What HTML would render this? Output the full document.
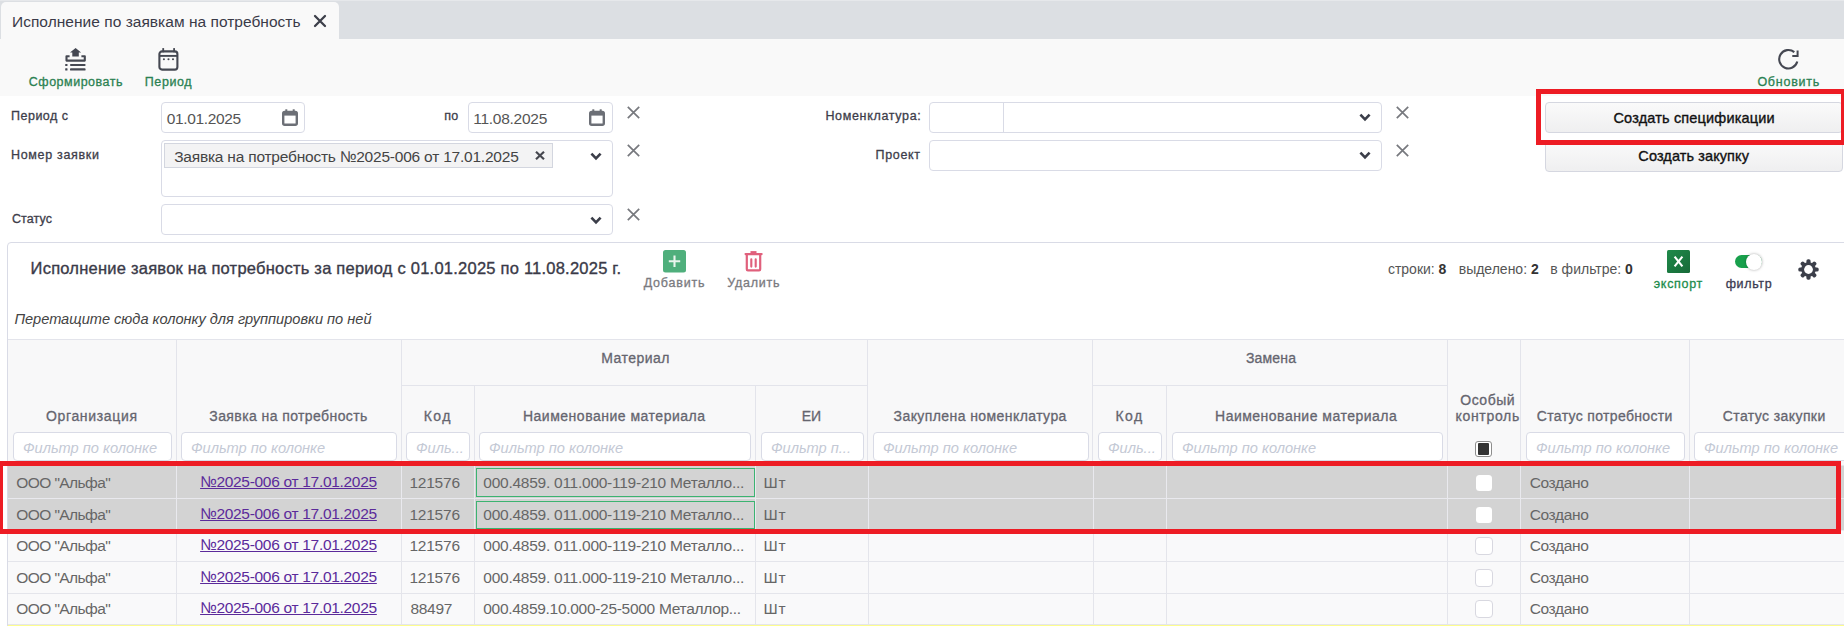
<!DOCTYPE html>
<html><head><meta charset="utf-8"><style>
html,body{margin:0;padding:0;}
body{width:1844px;height:626px;position:relative;overflow:hidden;background:#fff;font-family:"Liberation Sans", sans-serif;}
.t{position:absolute;white-space:nowrap;line-height:1;}
.r{position:absolute;}
</style></head><body>
<div class="r" style="left:0px;top:0px;width:1844px;height:39px;background:#dcdfe3;"></div>
<div class="r" style="left:0px;top:0px;width:1844px;height:1px;background:#e6e8eb;"></div>
<div class="r" style="left:1px;top:2px;width:338px;height:37px;background:#f9f9f9;border-radius:5px 5px 0 0;"></div>
<div class="t" style="left:12.00px;top:13.68px;font-size:15.5px;font-weight:normal;color:#3a3a48;letter-spacing:0.027px;">Исполнение по заявкам на потребность</div>
<svg class="r" style="left:313px;top:14px" width="14" height="14" viewBox="0 0 14 14"><path d="M2 2L12 12M12 2L2 12" stroke="#3d3f4a" stroke-width="2.3" stroke-linecap="round"/></svg>
<div class="r" style="left:0px;top:39px;width:1844px;height:57px;background:#f9f9f9;"></div>
<svg class="r" style="left:65px;top:48px" width="21" height="23" viewBox="0 0 21 23">
<path d="M10.6 0.1L5 4.4H7.3V8.5H13.8V4.4H16.1Z" fill="#454852"/>
<path d="M4.6 8.3H1.5V12.6H19.8V8.3H16.4" fill="none" stroke="#454852" stroke-width="2.1" stroke-linejoin="round"/>
<rect x="0.2" y="15.9" width="2.3" height="2.1" rx="0.5" fill="#454852"/>
<rect x="5" y="15.9" width="15.6" height="2.1" rx="0.9" fill="#454852"/>
<rect x="0.2" y="20.3" width="2.3" height="2.3" rx="0.5" fill="#454852"/>
<rect x="5" y="20.3" width="15.6" height="2.3" rx="0.9" fill="#454852"/>
</svg>
<div class="t" style="left:28.80px;top:75.82px;font-size:12.5px;font-weight:normal;color:#2b8152;letter-spacing:0.509px;-webkit-text-stroke:0.3px #2b8152;">Сформировать</div>
<svg class="r" style="left:158px;top:48px" width="21" height="23" viewBox="0 0 21 23">
<rect x="1.4" y="3.4" width="18" height="18.2" rx="2.6" fill="none" stroke="#454852" stroke-width="2.1"/>
<path d="M1.4 7.9H19.4" stroke="#454852" stroke-width="1.9"/>
<rect x="4.3" y="0.1" width="1.8" height="4.2" fill="#454852"/>
<rect x="15.2" y="0.1" width="1.8" height="4.2" fill="#454852"/>
<circle cx="5.9" cy="11.3" r="1.05" fill="#454852"/>
<circle cx="10.5" cy="11.3" r="1.05" fill="#454852"/>
<circle cx="15.0" cy="11.3" r="1.05" fill="#454852"/>
</svg>
<div class="t" style="left:144.80px;top:75.82px;font-size:12.5px;font-weight:normal;color:#2b8152;letter-spacing:0.590px;-webkit-text-stroke:0.3px #2b8152;">Период</div>
<svg class="r" style="left:1777px;top:48px" width="23" height="23" viewBox="0 0 23 23">
<path d="M20.3 13.6A9.2 9.2 0 1 1 17.3 4.15" fill="none" stroke="#454852" stroke-width="2.1"/>
<path d="M20.6 2.6V7.9H15.3" fill="none" stroke="#454852" stroke-width="2"/>
</svg>
<div class="t" style="left:1757.40px;top:75.62px;font-size:12.5px;font-weight:normal;color:#2b8152;letter-spacing:0.759px;-webkit-text-stroke:0.3px #2b8152;">Обновить</div>
<div class="t" style="left:11.00px;top:109.52px;font-size:12.5px;font-weight:normal;color:#3d3d4a;letter-spacing:0.498px;-webkit-text-stroke:0.3px #3d3d4a;">Период с</div>
<div class="t" style="left:11.00px;top:149.02px;font-size:12.5px;font-weight:normal;color:#3d3d4a;letter-spacing:0.672px;-webkit-text-stroke:0.3px #3d3d4a;">Номер заявки</div>
<div class="t" style="left:12.00px;top:212.82px;font-size:12.5px;font-weight:normal;color:#3d3d4a;letter-spacing:0.087px;-webkit-text-stroke:0.3px #3d3d4a;">Статус</div>
<div class="t" style="left:444.30px;top:109.52px;font-size:12.5px;font-weight:normal;color:#3d3d4a;letter-spacing:0.231px;-webkit-text-stroke:0.3px #3d3d4a;">по</div>
<div class="r" style="left:161px;top:102px;width:144px;height:31px;border:1px solid #d9dbe6;border-radius:4px;background:#fff;box-sizing:border-box;"></div>
<div class="t" style="left:166.80px;top:110.78px;font-size:15.5px;font-weight:normal;color:#555;letter-spacing:-0.351px;">01.01.2025</div>
<svg class="r" style="left:282px;top:109px" width="16" height="17" viewBox="0 0 16 17">
<rect x="1.2" y="3" width="13.6" height="12.8" rx="1.5" fill="none" stroke="#6c6f76" stroke-width="2.4"/>
<rect x="1.2" y="3" width="13.6" height="3.6" fill="#6c6f76"/>
<rect x="3.3" y="0.3" width="2" height="3" fill="#6c6f76"/>
<rect x="10.7" y="0.3" width="2" height="3" fill="#6c6f76"/>
</svg>
<div class="r" style="left:468px;top:102px;width:145px;height:31px;border:1px solid #d9dbe6;border-radius:4px;background:#fff;box-sizing:border-box;"></div>
<div class="t" style="left:473.20px;top:110.78px;font-size:15.5px;font-weight:normal;color:#555;letter-spacing:-0.256px;">11.08.2025</div>
<svg class="r" style="left:589px;top:109px" width="16" height="17" viewBox="0 0 16 17">
<rect x="1.2" y="3" width="13.6" height="12.8" rx="1.5" fill="none" stroke="#6c6f76" stroke-width="2.4"/>
<rect x="1.2" y="3" width="13.6" height="3.6" fill="#6c6f76"/>
<rect x="3.3" y="0.3" width="2" height="3" fill="#6c6f76"/>
<rect x="10.7" y="0.3" width="2" height="3" fill="#6c6f76"/>
</svg>
<svg class="r" style="left:626.7px;top:106px" width="13" height="13" viewBox="0 0 13 13"><path d="M0.8 0.8L12.2 12.2M12.2 0.8L0.8 12.2" stroke="#77797e" stroke-width="1.7"/></svg>
<div class="r" style="left:161px;top:140px;width:452px;height:57px;border:1px solid #d9dbe6;border-radius:4px;background:#fff;box-sizing:border-box;"></div>
<div class="r" style="left:164px;top:143px;width:389px;height:25px;background:#f3f3f4;border:1px solid #d3d6df;box-sizing:border-box;"></div>
<div class="t" style="left:174.20px;top:149.28px;font-size:15.5px;font-weight:normal;color:#444;letter-spacing:-0.213px;">Заявка на потребность №2025-006 от 17.01.2025</div>
<svg class="r" style="left:535px;top:150.9px" width="10" height="9" viewBox="0 0 10 9"><path d="M1 0.8L9 8.2M9 0.8L1 8.2" stroke="#45474f" stroke-width="2.2"/></svg>
<svg class="r" style="left:590px;top:152px" width="12" height="9" viewBox="0 0 12 9"><path d="M1.4 1.6L6 6.4L10.6 1.6" fill="none" stroke="#3b3e49" stroke-width="2.6"/></svg>
<svg class="r" style="left:626.7px;top:144px" width="13" height="13" viewBox="0 0 13 13"><path d="M0.8 0.8L12.2 12.2M12.2 0.8L0.8 12.2" stroke="#77797e" stroke-width="1.7"/></svg>
<div class="r" style="left:161px;top:204px;width:452px;height:31px;border:1px solid #d9dbe6;border-radius:4px;background:#fff;box-sizing:border-box;"></div>
<svg class="r" style="left:590px;top:216px" width="12" height="9" viewBox="0 0 12 9"><path d="M1.4 1.6L6 6.4L10.6 1.6" fill="none" stroke="#3b3e49" stroke-width="2.6"/></svg>
<svg class="r" style="left:626.7px;top:208px" width="13" height="13" viewBox="0 0 13 13"><path d="M0.8 0.8L12.2 12.2M12.2 0.8L0.8 12.2" stroke="#77797e" stroke-width="1.7"/></svg>
<div class="t" style="left:825.40px;top:109.62px;font-size:12.5px;font-weight:normal;color:#3d3d4a;letter-spacing:0.668px;-webkit-text-stroke:0.3px #3d3d4a;">Номенклатура:</div>
<div class="t" style="left:875.50px;top:148.62px;font-size:12.5px;font-weight:normal;color:#3d3d4a;letter-spacing:0.670px;-webkit-text-stroke:0.3px #3d3d4a;">Проект</div>
<div class="r" style="left:929px;top:102px;width:453px;height:31px;border:1px solid #d9dbe6;border-radius:4px;background:#fff;box-sizing:border-box;"></div>
<div class="r" style="left:1003px;top:103px;width:1px;height:29px;background:#d9dbe6;"></div>
<svg class="r" style="left:1359px;top:113px" width="12" height="9" viewBox="0 0 12 9"><path d="M1.4 1.6L6 6.4L10.6 1.6" fill="none" stroke="#3b3e49" stroke-width="2.6"/></svg>
<div class="r" style="left:929px;top:140px;width:453px;height:31px;border:1px solid #d9dbe6;border-radius:4px;background:#fff;box-sizing:border-box;"></div>
<svg class="r" style="left:1359px;top:151px" width="12" height="9" viewBox="0 0 12 9"><path d="M1.4 1.6L6 6.4L10.6 1.6" fill="none" stroke="#3b3e49" stroke-width="2.6"/></svg>
<svg class="r" style="left:1396px;top:106px" width="13" height="13" viewBox="0 0 13 13"><path d="M0.8 0.8L12.2 12.2M12.2 0.8L0.8 12.2" stroke="#77797e" stroke-width="1.7"/></svg>
<svg class="r" style="left:1396px;top:144px" width="13" height="13" viewBox="0 0 13 13"><path d="M0.8 0.8L12.2 12.2M12.2 0.8L0.8 12.2" stroke="#77797e" stroke-width="1.7"/></svg>
<div class="r" style="left:1545px;top:102px;width:298px;height:31px;border:1px solid #d5d7e0;border-radius:4px;background:linear-gradient(#fafafa,#efeff0);box-sizing:border-box;"></div>
<div class="t" style="left:1613.45px;top:110.62px;font-size:14.5px;font-weight:normal;color:#111;letter-spacing:0.170px;-webkit-text-stroke:0.35px #111;">Создать спецификации</div>
<div class="r" style="left:1545px;top:141px;width:298px;height:31px;border:1px solid #d5d7e0;border-radius:4px;background:linear-gradient(#fafafa,#efeff0);box-sizing:border-box;"></div>
<div class="t" style="left:1638.35px;top:148.72px;font-size:14.5px;font-weight:normal;color:#111;letter-spacing:0.096px;-webkit-text-stroke:0.35px #111;">Создать закупку</div>
<div class="r" style="left:1536px;top:89px;width:310px;height:56px;border:5px solid #ed1c24;box-sizing:border-box;"></div>
<div class="r" style="left:7px;top:242px;width:1850px;height:500px;border:1px solid #d9dbe6;border-radius:4px;background:#fff;box-sizing:border-box;"></div>
<div class="t" style="left:30.60px;top:260.23px;font-size:16.5px;font-weight:normal;color:#3a3a48;letter-spacing:0.230px;-webkit-text-stroke:0.35px #3a3a48;">Исполнение заявок на потребность за период с 01.01.2025 по 11.08.2025 г.</div>
<svg class="r" style="left:663px;top:250px" width="23" height="23" viewBox="0 0 23 23">
<rect x="0" y="0" width="23" height="22.5" rx="2.5" fill="#4faf7c"/>
<path d="M11.5 5.5V17M5.8 11.3H17.2" stroke="#e9f5ed" stroke-width="2.1"/>
</svg>
<div class="t" style="left:643.70px;top:277.02px;font-size:12.5px;font-weight:normal;color:#7a7a80;letter-spacing:0.796px;-webkit-text-stroke:0.3px #7a7a80;">Добавить</div>
<svg class="r" style="left:744px;top:251px" width="19" height="21" viewBox="0 0 19 21">
<path d="M6.5 1.2H12.5" stroke="#e0607c" stroke-width="2.2"/>
<path d="M1.6 3.1H17.6" stroke="#e0607c" stroke-width="2.3" stroke-linecap="round"/>
<path d="M2.8 4V18.3Q2.8 19.4 3.9 19.4H15.1Q16.2 19.4 16.2 18.3V4" fill="none" stroke="#e0607c" stroke-width="2.2"/>
<path d="M7.3 8.3V15.6M11.7 8.3V15.6" stroke="#e0607c" stroke-width="2.1" stroke-linecap="round"/>
</svg>
<div class="t" style="left:727.30px;top:277.02px;font-size:12.5px;font-weight:normal;color:#7a7a80;letter-spacing:0.732px;-webkit-text-stroke:0.3px #7a7a80;">Удалить</div>
<div class="t" style="left:1387.9px;top:262.05px;font-size:14px;color:#555;">строки: <b style="color:#333">8</b></div>
<div class="t" style="left:1458.7px;top:262.05px;font-size:14px;color:#555;">выделено: <b style="color:#333">2</b></div>
<div class="t" style="left:1550.3px;top:262.05px;font-size:14px;color:#555;">в фильтре: <b style="color:#333">0</b></div>
<svg class="r" style="left:1667px;top:250px" width="23" height="23" viewBox="0 0 23 23">
<defs><linearGradient id="xg" x1="0" y1="0" x2="1" y2="1"><stop offset="0" stop-color="#1f8a4a"/><stop offset="1" stop-color="#176a38"/></linearGradient></defs>
<rect x="0" y="0" width="23" height="23" rx="1.5" fill="url(#xg)"/>
<path d="M7.6 6.6L15.4 16.4M15.4 6.6L7.6 16.4" stroke="#fff" stroke-width="2.1"/>
</svg>
<div class="t" style="left:1653.80px;top:277.52px;font-size:12.5px;font-weight:normal;color:#1c8c4c;letter-spacing:0.677px;-webkit-text-stroke:0.3px #1c8c4c;">экспорт</div>
<div class="r" style="left:1735px;top:255px;width:27px;height:13px;background:#18a04c;border-radius:7px;"></div>
<div class="r" style="left:1746px;top:254px;width:16px;height:16px;background:#fff;border-radius:50%;box-shadow:0 0 3px rgba(0,0,0,0.35);"></div>
<div class="t" style="left:1725.70px;top:277.52px;font-size:12.5px;font-weight:normal;color:#3a3a50;letter-spacing:0.636px;-webkit-text-stroke:0.3px #3a3a50;">фильтр</div>
<svg class="r" style="left:1798px;top:259px" width="21" height="21" viewBox="-10.5 -10.5 21 21">
<g fill="#3c3f4a"><rect x="-2.1" y="-10.2" width="4.2" height="5" rx="1.7" transform="rotate(0)"/><rect x="-2.1" y="-10.2" width="4.2" height="5" rx="1.7" transform="rotate(45)"/><rect x="-2.1" y="-10.2" width="4.2" height="5" rx="1.7" transform="rotate(90)"/><rect x="-2.1" y="-10.2" width="4.2" height="5" rx="1.7" transform="rotate(135)"/><rect x="-2.1" y="-10.2" width="4.2" height="5" rx="1.7" transform="rotate(180)"/><rect x="-2.1" y="-10.2" width="4.2" height="5" rx="1.7" transform="rotate(225)"/><rect x="-2.1" y="-10.2" width="4.2" height="5" rx="1.7" transform="rotate(270)"/><rect x="-2.1" y="-10.2" width="4.2" height="5" rx="1.7" transform="rotate(315)"/>
<circle r="7.3"/></g><circle r="4.4" fill="#fff"/>
</svg>
<div class="t" style="left:14.40px;top:311.74px;font-size:14.6px;font-weight:normal;color:#444;letter-spacing:-0.006px;font-style:italic;">Перетащите сюда колонку для группировки по ней</div>
<div class="r" style="left:8px;top:339px;width:1840px;height:127px;background:#f8f8f9;"></div>
<div class="r" style="left:8px;top:339px;width:1840px;height:1px;background:#e3e4eb;"></div>
<div class="r" style="left:176px;top:339px;width:1px;height:128px;background:#e3e4eb;"></div>
<div class="r" style="left:401px;top:339px;width:1px;height:128px;background:#e3e4eb;"></div>
<div class="r" style="left:867px;top:339px;width:1px;height:128px;background:#e3e4eb;"></div>
<div class="r" style="left:1092px;top:339px;width:1px;height:128px;background:#e3e4eb;"></div>
<div class="r" style="left:1447px;top:339px;width:1px;height:128px;background:#e3e4eb;"></div>
<div class="r" style="left:1520px;top:339px;width:1px;height:128px;background:#e3e4eb;"></div>
<div class="r" style="left:1689px;top:339px;width:1px;height:128px;background:#e3e4eb;"></div>
<div class="r" style="left:474px;top:385px;width:1px;height:82px;background:#e3e4eb;"></div>
<div class="r" style="left:755px;top:385px;width:1px;height:82px;background:#e3e4eb;"></div>
<div class="r" style="left:1166px;top:385px;width:1px;height:82px;background:#e3e4eb;"></div>
<div class="r" style="left:401px;top:385px;width:466px;height:1px;background:#e3e4eb;"></div>
<div class="r" style="left:1092px;top:385px;width:355px;height:1px;background:#e3e4eb;"></div>
<div class="t" style="left:45.95px;top:408.85px;font-size:14px;font-weight:normal;color:#65656f;letter-spacing:0.664px;-webkit-text-stroke:0.3px #65656f;">Организация</div>
<div class="t" style="left:209.30px;top:408.85px;font-size:14px;font-weight:normal;color:#65656f;letter-spacing:0.409px;-webkit-text-stroke:0.3px #65656f;">Заявка на потребность</div>
<div class="t" style="left:423.65px;top:408.85px;font-size:14px;font-weight:normal;color:#65656f;letter-spacing:1.433px;-webkit-text-stroke:0.3px #65656f;">Код</div>
<div class="t" style="left:522.95px;top:408.85px;font-size:14px;font-weight:normal;color:#65656f;letter-spacing:0.507px;-webkit-text-stroke:0.3px #65656f;">Наименование материала</div>
<div class="t" style="left:801.65px;top:408.85px;font-size:14px;font-weight:normal;color:#65656f;letter-spacing:-0.038px;-webkit-text-stroke:0.3px #65656f;">ЕИ</div>
<div class="t" style="left:893.60px;top:408.85px;font-size:14px;font-weight:normal;color:#65656f;letter-spacing:0.416px;-webkit-text-stroke:0.3px #65656f;">Закуплена номенклатура</div>
<div class="t" style="left:1115.45px;top:408.85px;font-size:14px;font-weight:normal;color:#65656f;letter-spacing:1.433px;-webkit-text-stroke:0.3px #65656f;">Код</div>
<div class="t" style="left:1215.05px;top:408.85px;font-size:14px;font-weight:normal;color:#65656f;letter-spacing:0.488px;-webkit-text-stroke:0.3px #65656f;">Наименование материала</div>
<div class="t" style="left:1460.25px;top:392.85px;font-size:14px;font-weight:normal;color:#65656f;letter-spacing:0.517px;-webkit-text-stroke:0.3px #65656f;">Особый</div>
<div class="t" style="left:1455.50px;top:409.05px;font-size:14px;font-weight:normal;color:#65656f;letter-spacing:0.679px;-webkit-text-stroke:0.3px #65656f;">контроль</div>
<div class="t" style="left:1536.80px;top:408.85px;font-size:14px;font-weight:normal;color:#65656f;letter-spacing:0.342px;-webkit-text-stroke:0.3px #65656f;">Статус потребности</div>
<div class="t" style="left:1722.80px;top:408.85px;font-size:14px;font-weight:normal;color:#65656f;letter-spacing:0.405px;-webkit-text-stroke:0.3px #65656f;">Статус закупки</div>
<div class="t" style="left:601.20px;top:351.35px;font-size:14px;font-weight:normal;color:#65656f;letter-spacing:0.481px;-webkit-text-stroke:0.3px #65656f;">Материал</div>
<div class="t" style="left:1245.90px;top:351.35px;font-size:14px;font-weight:normal;color:#65656f;letter-spacing:0.183px;-webkit-text-stroke:0.3px #65656f;">Замена</div>
<div class="r" style="left:13px;top:432px;width:159px;height:29px;border:1px solid #d9dbe6;border-radius:4px;background:#fff;box-sizing:border-box;"></div>
<div class="t" style="left:23.00px;top:441.04px;width:146.00px;overflow:hidden;font-size:14.6px;font-style:italic;color:#c4c9d5;">Фильтр по колонке</div>
<div class="r" style="left:181px;top:432px;width:216px;height:29px;border:1px solid #d9dbe6;border-radius:4px;background:#fff;box-sizing:border-box;"></div>
<div class="t" style="left:191.00px;top:441.04px;width:203.00px;overflow:hidden;font-size:14.6px;font-style:italic;color:#c4c9d5;">Фильтр по колонке</div>
<div class="r" style="left:406px;top:432px;width:64px;height:29px;border:1px solid #d9dbe6;border-radius:4px;background:#fff;box-sizing:border-box;"></div>
<div class="t" style="left:416.00px;top:441.04px;width:51.00px;overflow:hidden;font-size:14.6px;font-style:italic;color:#c4c9d5;">Филь...</div>
<div class="r" style="left:479px;top:432px;width:272px;height:29px;border:1px solid #d9dbe6;border-radius:4px;background:#fff;box-sizing:border-box;"></div>
<div class="t" style="left:489.00px;top:441.04px;width:259.00px;overflow:hidden;font-size:14.6px;font-style:italic;color:#c4c9d5;">Фильтр по колонке</div>
<div class="r" style="left:761px;top:432px;width:103px;height:29px;border:1px solid #d9dbe6;border-radius:4px;background:#fff;box-sizing:border-box;"></div>
<div class="t" style="left:771.00px;top:441.04px;width:90.00px;overflow:hidden;font-size:14.6px;font-style:italic;color:#c4c9d5;">Фильтр п...</div>
<div class="r" style="left:873px;top:432px;width:216px;height:29px;border:1px solid #d9dbe6;border-radius:4px;background:#fff;box-sizing:border-box;"></div>
<div class="t" style="left:883.00px;top:441.04px;width:203.00px;overflow:hidden;font-size:14.6px;font-style:italic;color:#c4c9d5;">Фильтр по колонке</div>
<div class="r" style="left:1098px;top:432px;width:64px;height:29px;border:1px solid #d9dbe6;border-radius:4px;background:#fff;box-sizing:border-box;"></div>
<div class="t" style="left:1108.00px;top:441.04px;width:51.00px;overflow:hidden;font-size:14.6px;font-style:italic;color:#c4c9d5;">Филь...</div>
<div class="r" style="left:1172px;top:432px;width:271px;height:29px;border:1px solid #d9dbe6;border-radius:4px;background:#fff;box-sizing:border-box;"></div>
<div class="t" style="left:1182.00px;top:441.04px;width:258.00px;overflow:hidden;font-size:14.6px;font-style:italic;color:#c4c9d5;">Фильтр по колонке</div>
<div class="r" style="left:1526px;top:432px;width:159px;height:29px;border:1px solid #d9dbe6;border-radius:4px;background:#fff;box-sizing:border-box;"></div>
<div class="t" style="left:1536.00px;top:441.04px;width:146.00px;overflow:hidden;font-size:14.6px;font-style:italic;color:#c4c9d5;">Фильтр по колонке</div>
<div class="r" style="left:1694px;top:432px;width:177px;height:29px;border:1px solid #d9dbe6;border-radius:4px;background:#fff;box-sizing:border-box;"></div>
<div class="t" style="left:1704.00px;top:441.04px;width:164.00px;overflow:hidden;font-size:14.6px;font-style:italic;color:#c4c9d5;">Фильтр по колонке</div>
<div class="r" style="left:1475.3px;top:440.7px;width:16.5px;height:16.5px;border:1px solid #8d8d8d;border-radius:3px;background:#fff;box-sizing:border-box;"></div>
<div class="r" style="left:1477.8px;top:443.2px;width:11.5px;height:11.5px;background:#333;border-radius:1px;"></div>
<div class="r" style="left:8px;top:465px;width:1840px;height:1px;background:#e4e5eb;"></div>
<div class="r" style="left:8px;top:466px;width:1840px;height:32px;background:#d3d3d3;"></div>
<div class="r" style="left:8px;top:498px;width:1840px;height:1px;background:#e9e9ee;"></div>
<div class="r" style="left:176px;top:466px;width:1px;height:32px;background:#e9e9ee;"></div>
<div class="r" style="left:401px;top:466px;width:1px;height:32px;background:#e9e9ee;"></div>
<div class="r" style="left:868px;top:466px;width:1px;height:32px;background:#e9e9ee;"></div>
<div class="r" style="left:1093px;top:466px;width:1px;height:32px;background:#e9e9ee;"></div>
<div class="r" style="left:1447px;top:466px;width:1px;height:32px;background:#e9e9ee;"></div>
<div class="r" style="left:1520px;top:466px;width:1px;height:32px;background:#e9e9ee;"></div>
<div class="r" style="left:1689px;top:466px;width:1px;height:32px;background:#e9e9ee;"></div>
<div class="r" style="left:474px;top:466px;width:1px;height:32px;background:#e9e9ee;"></div>
<div class="r" style="left:755px;top:466px;width:1px;height:32px;background:#e9e9ee;"></div>
<div class="r" style="left:1166px;top:466px;width:1px;height:32px;background:#e9e9ee;"></div>
<div class="t" style="left:16.30px;top:475.18px;font-size:15.5px;font-weight:normal;color:#666;letter-spacing:-0.591px;">ООО "Альфа"</div>
<div class="t" style="left:200.10px;top:473.78px;font-size:15.5px;font-weight:normal;color:#5b2a9a;letter-spacing:-0.304px;text-decoration:underline;">№2025-006 от 17.01.2025</div>
<div class="t" style="left:409.40px;top:475.18px;font-size:15.5px;font-weight:normal;color:#666;letter-spacing:-0.220px;">121576</div>
<div class="t" style="left:483.30px;top:475.18px;font-size:15.5px;font-weight:normal;color:#666;letter-spacing:-0.254px;">000.4859. 011.000-119-210 Металло...</div>
<div class="t" style="left:763.60px;top:475.18px;font-size:15.5px;font-weight:normal;color:#666;letter-spacing:0.794px;">Шт</div>
<div class="t" style="left:1529.70px;top:475.18px;font-size:15.5px;font-weight:normal;color:#666;letter-spacing:-0.355px;">Создано</div>
<div class="r" style="left:1476px;top:474.6px;width:16px;height:16px;background:#fff;border-radius:3.5px;"></div>
<div class="r" style="left:475.5px;top:467.5px;width:279.5px;height:29.2px;border:1px solid #3cb371;box-sizing:border-box;"></div>
<div class="r" style="left:8px;top:499px;width:1840px;height:31px;background:#d3d3d3;"></div>
<div class="r" style="left:8px;top:530px;width:1840px;height:1px;background:#e9e9ee;"></div>
<div class="r" style="left:176px;top:499px;width:1px;height:31px;background:#e9e9ee;"></div>
<div class="r" style="left:401px;top:499px;width:1px;height:31px;background:#e9e9ee;"></div>
<div class="r" style="left:868px;top:499px;width:1px;height:31px;background:#e9e9ee;"></div>
<div class="r" style="left:1093px;top:499px;width:1px;height:31px;background:#e9e9ee;"></div>
<div class="r" style="left:1447px;top:499px;width:1px;height:31px;background:#e9e9ee;"></div>
<div class="r" style="left:1520px;top:499px;width:1px;height:31px;background:#e9e9ee;"></div>
<div class="r" style="left:1689px;top:499px;width:1px;height:31px;background:#e9e9ee;"></div>
<div class="r" style="left:474px;top:499px;width:1px;height:31px;background:#e9e9ee;"></div>
<div class="r" style="left:755px;top:499px;width:1px;height:31px;background:#e9e9ee;"></div>
<div class="r" style="left:1166px;top:499px;width:1px;height:31px;background:#e9e9ee;"></div>
<div class="t" style="left:16.30px;top:507.18px;font-size:15.5px;font-weight:normal;color:#666;letter-spacing:-0.591px;">ООО "Альфа"</div>
<div class="t" style="left:200.10px;top:505.78px;font-size:15.5px;font-weight:normal;color:#5b2a9a;letter-spacing:-0.304px;text-decoration:underline;">№2025-006 от 17.01.2025</div>
<div class="t" style="left:409.40px;top:507.18px;font-size:15.5px;font-weight:normal;color:#666;letter-spacing:-0.220px;">121576</div>
<div class="t" style="left:483.30px;top:507.18px;font-size:15.5px;font-weight:normal;color:#666;letter-spacing:-0.254px;">000.4859. 011.000-119-210 Металло...</div>
<div class="t" style="left:763.60px;top:507.18px;font-size:15.5px;font-weight:normal;color:#666;letter-spacing:0.794px;">Шт</div>
<div class="t" style="left:1529.70px;top:507.18px;font-size:15.5px;font-weight:normal;color:#666;letter-spacing:-0.355px;">Создано</div>
<div class="r" style="left:1476px;top:506.6px;width:16px;height:16px;background:#fff;border-radius:3.5px;"></div>
<div class="r" style="left:475.5px;top:500.5px;width:279.5px;height:28.2px;border:1px solid #3cb371;box-sizing:border-box;"></div>
<div class="r" style="left:8px;top:531px;width:1840px;height:30px;background:#f9f9fa;"></div>
<div class="r" style="left:8px;top:561px;width:1840px;height:1px;background:#e4e5eb;"></div>
<div class="r" style="left:176px;top:531px;width:1px;height:30px;background:#e4e5eb;"></div>
<div class="r" style="left:401px;top:531px;width:1px;height:30px;background:#e4e5eb;"></div>
<div class="r" style="left:868px;top:531px;width:1px;height:30px;background:#e4e5eb;"></div>
<div class="r" style="left:1093px;top:531px;width:1px;height:30px;background:#e4e5eb;"></div>
<div class="r" style="left:1447px;top:531px;width:1px;height:30px;background:#e4e5eb;"></div>
<div class="r" style="left:1520px;top:531px;width:1px;height:30px;background:#e4e5eb;"></div>
<div class="r" style="left:1689px;top:531px;width:1px;height:30px;background:#e4e5eb;"></div>
<div class="r" style="left:474px;top:531px;width:1px;height:30px;background:#e4e5eb;"></div>
<div class="r" style="left:755px;top:531px;width:1px;height:30px;background:#e4e5eb;"></div>
<div class="r" style="left:1166px;top:531px;width:1px;height:30px;background:#e4e5eb;"></div>
<div class="t" style="left:16.30px;top:538.18px;font-size:15.5px;font-weight:normal;color:#666;letter-spacing:-0.591px;">ООО "Альфа"</div>
<div class="t" style="left:200.10px;top:536.78px;font-size:15.5px;font-weight:normal;color:#5b2a9a;letter-spacing:-0.304px;text-decoration:underline;">№2025-006 от 17.01.2025</div>
<div class="t" style="left:409.40px;top:538.18px;font-size:15.5px;font-weight:normal;color:#666;letter-spacing:-0.220px;">121576</div>
<div class="t" style="left:483.30px;top:538.18px;font-size:15.5px;font-weight:normal;color:#666;letter-spacing:-0.254px;">000.4859. 011.000-119-210 Металло...</div>
<div class="t" style="left:763.60px;top:538.18px;font-size:15.5px;font-weight:normal;color:#666;letter-spacing:0.794px;">Шт</div>
<div class="t" style="left:1529.70px;top:538.18px;font-size:15.5px;font-weight:normal;color:#666;letter-spacing:-0.355px;">Создано</div>
<div class="r" style="left:1475px;top:536.5px;width:18px;height:18px;background:#fff;border:1px solid #d8d8e0;border-radius:4px;box-sizing:border-box;"></div>
<div class="r" style="left:8px;top:562px;width:1840px;height:31px;background:#f9f9fa;"></div>
<div class="r" style="left:8px;top:593px;width:1840px;height:1px;background:#e4e5eb;"></div>
<div class="r" style="left:176px;top:562px;width:1px;height:31px;background:#e4e5eb;"></div>
<div class="r" style="left:401px;top:562px;width:1px;height:31px;background:#e4e5eb;"></div>
<div class="r" style="left:868px;top:562px;width:1px;height:31px;background:#e4e5eb;"></div>
<div class="r" style="left:1093px;top:562px;width:1px;height:31px;background:#e4e5eb;"></div>
<div class="r" style="left:1447px;top:562px;width:1px;height:31px;background:#e4e5eb;"></div>
<div class="r" style="left:1520px;top:562px;width:1px;height:31px;background:#e4e5eb;"></div>
<div class="r" style="left:1689px;top:562px;width:1px;height:31px;background:#e4e5eb;"></div>
<div class="r" style="left:474px;top:562px;width:1px;height:31px;background:#e4e5eb;"></div>
<div class="r" style="left:755px;top:562px;width:1px;height:31px;background:#e4e5eb;"></div>
<div class="r" style="left:1166px;top:562px;width:1px;height:31px;background:#e4e5eb;"></div>
<div class="t" style="left:16.30px;top:570.18px;font-size:15.5px;font-weight:normal;color:#666;letter-spacing:-0.591px;">ООО "Альфа"</div>
<div class="t" style="left:200.10px;top:568.78px;font-size:15.5px;font-weight:normal;color:#5b2a9a;letter-spacing:-0.304px;text-decoration:underline;">№2025-006 от 17.01.2025</div>
<div class="t" style="left:409.40px;top:570.18px;font-size:15.5px;font-weight:normal;color:#666;letter-spacing:-0.220px;">121576</div>
<div class="t" style="left:483.30px;top:570.18px;font-size:15.5px;font-weight:normal;color:#666;letter-spacing:-0.254px;">000.4859. 011.000-119-210 Металло...</div>
<div class="t" style="left:763.60px;top:570.18px;font-size:15.5px;font-weight:normal;color:#666;letter-spacing:0.794px;">Шт</div>
<div class="t" style="left:1529.70px;top:570.18px;font-size:15.5px;font-weight:normal;color:#666;letter-spacing:-0.355px;">Создано</div>
<div class="r" style="left:1475px;top:568.5px;width:18px;height:18px;background:#fff;border:1px solid #d8d8e0;border-radius:4px;box-sizing:border-box;"></div>
<div class="r" style="left:8px;top:594px;width:1840px;height:30px;background:#f9f9fa;"></div>
<div class="r" style="left:8px;top:624px;width:1840px;height:1px;background:#e4e5eb;"></div>
<div class="r" style="left:176px;top:594px;width:1px;height:30px;background:#e4e5eb;"></div>
<div class="r" style="left:401px;top:594px;width:1px;height:30px;background:#e4e5eb;"></div>
<div class="r" style="left:868px;top:594px;width:1px;height:30px;background:#e4e5eb;"></div>
<div class="r" style="left:1093px;top:594px;width:1px;height:30px;background:#e4e5eb;"></div>
<div class="r" style="left:1447px;top:594px;width:1px;height:30px;background:#e4e5eb;"></div>
<div class="r" style="left:1520px;top:594px;width:1px;height:30px;background:#e4e5eb;"></div>
<div class="r" style="left:1689px;top:594px;width:1px;height:30px;background:#e4e5eb;"></div>
<div class="r" style="left:474px;top:594px;width:1px;height:30px;background:#e4e5eb;"></div>
<div class="r" style="left:755px;top:594px;width:1px;height:30px;background:#e4e5eb;"></div>
<div class="r" style="left:1166px;top:594px;width:1px;height:30px;background:#e4e5eb;"></div>
<div class="t" style="left:16.30px;top:601.18px;font-size:15.5px;font-weight:normal;color:#666;letter-spacing:-0.591px;">ООО "Альфа"</div>
<div class="t" style="left:200.10px;top:599.78px;font-size:15.5px;font-weight:normal;color:#5b2a9a;letter-spacing:-0.304px;text-decoration:underline;">№2025-006 от 17.01.2025</div>
<div class="t" style="left:410.40px;top:601.18px;font-size:15.5px;font-weight:normal;color:#666;letter-spacing:-0.270px;">88497</div>
<div class="t" style="left:483.30px;top:601.18px;font-size:15.5px;font-weight:normal;color:#666;letter-spacing:-0.296px;">000.4859.10.000-25-5000 Металлор...</div>
<div class="t" style="left:763.60px;top:601.18px;font-size:15.5px;font-weight:normal;color:#666;letter-spacing:0.794px;">Шт</div>
<div class="t" style="left:1529.70px;top:601.18px;font-size:15.5px;font-weight:normal;color:#666;letter-spacing:-0.355px;">Создано</div>
<div class="r" style="left:1475px;top:599.5px;width:18px;height:18px;background:#fff;border:1px solid #d8d8e0;border-radius:4px;box-sizing:border-box;"></div>
<div class="r" style="left:8px;top:625px;width:1840px;height:35px;background:#fdfd8e;"></div>
<div class="r" style="left:7px;top:339px;width:1px;height:300px;background:#d9dbe6;"></div>
<div class="r" style="left:-2px;top:461px;width:1843px;height:73px;border:5px solid #ed1c24;box-sizing:border-box;"></div>
</body></html>
